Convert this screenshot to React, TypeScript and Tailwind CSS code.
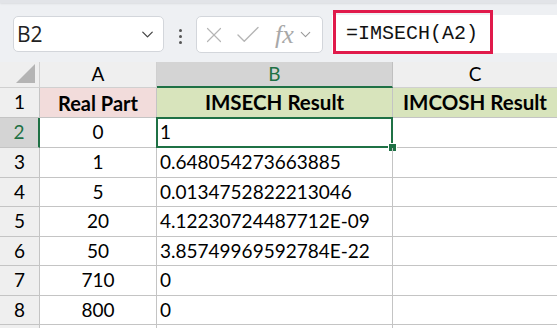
import { ChevronDown, X, Check } from "lucide-react";

const rows = [
  { a: "0", b: "1" },
  { a: "1", b: "0.648054273663885" },
  { a: "5", b: "0.0134752822213046" },
  { a: "20", b: "4.12230724487712E-09" },
  { a: "50", b: "3.85749969592784E-22" },
  { a: "710", b: "0" },
  { a: "800", b: "0" },
];

const heights = ["h-[30px]", "h-[30px]", "h-[29px]", "h-[30px]", "h-[29px]", "h-[30px]", "h-[29px]"];

const cellFont = { fontFamily: "Lato, 'Open Sans', sans-serif" };

export default function App() {
  return (
    <div className="w-[557px] h-[328px] overflow-hidden bg-white" style={{ fontFamily: "'Open Sans', 'Noto Sans', sans-serif" }}>
      {/* toolbar */}
      <div className="h-[62px] bg-[#eef0f3] relative">
        <div className="h-[3px] bg-[#e2e4e8] shadow-[0_1px_2px_rgba(0,0,0,0.08)]" />
        <div className="flex items-start pl-[13px] pt-[10px]">
          <div className="mt-[3px] w-[151px] h-[36px] bg-white border border-[#d3d6db] rounded-[5px] flex items-center pl-[3px] pr-[6px]">
            <span className="text-[21px] text-[#222] flex-1 leading-none">B2</span>
            <ChevronDown size={19} strokeWidth={1.6} className="text-[#444]" />
          </div>
          <div className="mt-[16px] w-[32px] flex flex-col items-center gap-[3px]">
            <span className="w-[3px] h-[3px] bg-[#555] rounded-full" />
            <span className="w-[3px] h-[3px] bg-[#555] rounded-full" />
            <span className="w-[3px] h-[3px] bg-[#555] rounded-full" />
          </div>
          <div className="mt-[3px] w-[127px] h-[37px] bg-white border border-[#d3d6db] rounded-[5px] flex items-center pl-[4px]">
            <X size={26} strokeWidth={1.1} className="text-[#b5b5b5]" />
            <Check size={30} strokeWidth={1.1} className="text-[#b5b5b5] ml-[6px]" />
            <span className="ml-[12px] text-[26px] italic text-[#a8a8a8] leading-none" style={{ fontFamily: "'Liberation Serif', serif" }}>fx</span>
            <ChevronDown size={17} strokeWidth={1.5} className="text-[#999] ml-[3px]" />
          </div>
          <div className="ml-[9px] mt-[2px] flex-1 h-[38px] bg-white relative">
            <div className="absolute left-[1px] top-[-5px] w-[160px] h-[44px] border-[3.5px] border-[#e01a4b]" />
            <div className="pl-[14px] h-full flex items-center text-[20px] text-[#111]" style={{ fontFamily: "'Liberation Mono', monospace" }}>
              =IMSECH(A2)
            </div>
          </div>
        </div>
      </div>

      {/* grid */}
      <div className="grid grid-cols-[40px_117px_236px_164px] text-[19px] text-black" style={cellFont}>
        {/* column headers */}
        <div className="h-[26px] bg-[#efefef] border-r border-b border-[#d0d0d0] flex items-end justify-end pr-[4px] pb-[4px]">
          <svg width="19" height="19" viewBox="0 0 19 19"><polygon points="19,0 19,19 0,19" fill="#b4b4b4" /></svg>
        </div>
        <div className="h-[26px] bg-[#efefef] border-r border-b border-[#d0d0d0] flex items-center justify-center">A</div>
        <div className="h-[26px] bg-[#d4d4d4] border-r border-[#c0c0c0] border-b-2 border-b-[#1f7145] flex items-center justify-center text-[#1f7145]">B</div>
        <div className="h-[26px] bg-[#efefef] border-b border-[#d0d0d0] flex items-center justify-center">C</div>

        {/* row 1 */}
        <div className="h-[30px] bg-[#efefef] border-r border-b border-[#c4c4c4] flex items-center justify-center">1</div>
        <div className="h-[30px] bg-[#f2dcdb] border-r border-b border-[#c4c4c4] flex items-center justify-center font-bold text-[20px]">Real Part</div>
        <div className="h-[30px] bg-[#d8e4bc] border-r border-b border-[#c4c4c4] flex items-center justify-center font-bold text-[20.5px]">IMSECH Result</div>
        <div className="h-[30px] bg-[#d8e4bc] border-b border-[#c4c4c4] flex items-center justify-center font-bold text-[20.5px]">IMCOSH Result</div>

        {rows.map((r, i) => {
          const h = heights[i];
          const sel = i === 0;
          return [
            <div key={`h${i}`} className={`${h} border-b border-[#c4c4c4] flex items-center justify-center ${sel ? "bg-[#d4d4d4] text-[#1f7145] border-r-2 border-r-[#1f7145]" : "bg-[#efefef] border-r border-r-[#c4c4c4]"}`}>{i + 2}</div>,
            <div key={`a${i}`} className={`${h} border-r border-b border-[#c4c4c4] flex items-center justify-center`}>{r.a}</div>,
            <div key={`b${i}`} className={`${h} relative border-r border-b border-[#c4c4c4] flex items-center pl-[3px]`}>
              {r.b}
              {sel && (
                <>
                  <div className="absolute inset-[-1px] border-2 border-[#1f7145]" />
                  <div className="absolute right-[-5px] bottom-[-5px] w-[9px] h-[9px] bg-[#1f7145] border border-white" />
                </>
              )}
            </div>,
            <div key={`c${i}`} className={`${h} border-b border-[#c4c4c4]`} />,
          ];
        })}
        <div className="h-[10px] bg-[#efefef] border-r border-[#c4c4c4]" />
        <div className="h-[10px] border-r border-[#c4c4c4]" />
        <div className="h-[10px] border-r border-[#c4c4c4]" />
        <div className="h-[10px]" />
      </div>
    </div>
  );
}
